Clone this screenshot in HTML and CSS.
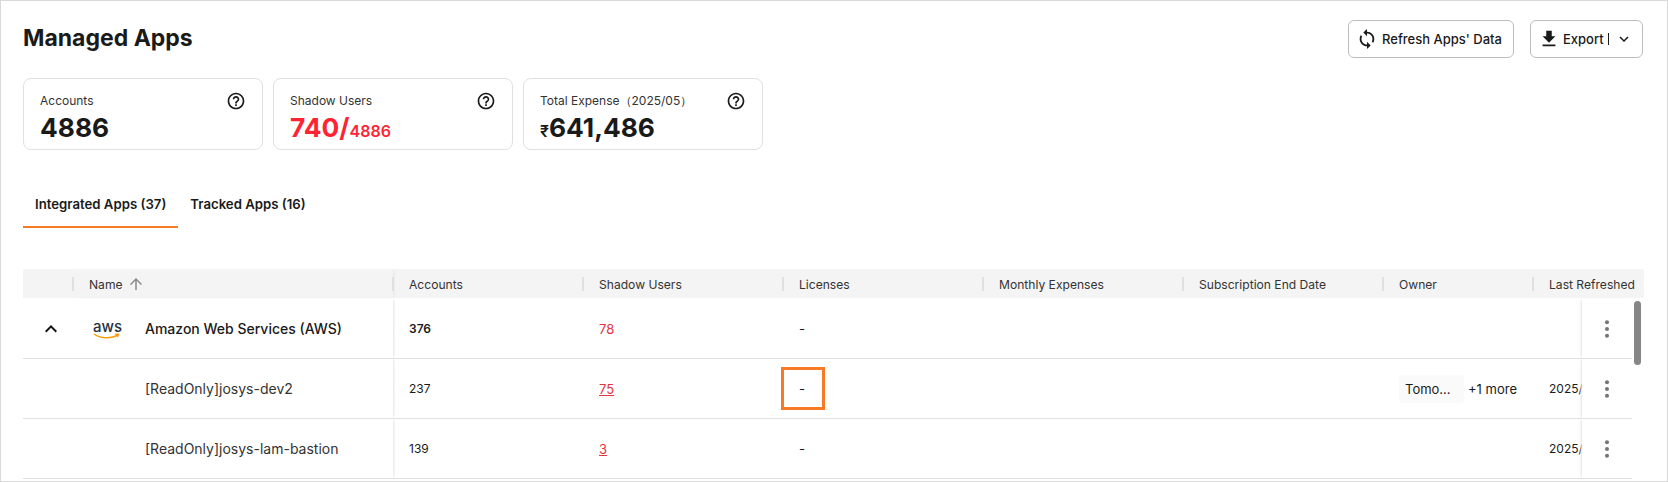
FILE: index.html
```html
<!DOCTYPE html>
<html lang="en">
  <head>
    <meta charset="UTF-8" />
    <meta name="viewport" content="width=device-width, initial-scale=1.0" />
    <title>Managed Apps</title>
    <link rel="stylesheet" href="styles.css">
  </head>
  <body>
    <div class="page">
      <div class="top">
        <h1 class="title">Managed Apps</h1>
        <div class="actions">
          <a href="javascript:;" class="btn refresh">
            <svg class="btn-icon" viewBox="0 0 24 24"><path d="M12 4V1L8 5l4 4V6c3.31 0 6 2.69 6 6 0 1.01-.25 1.97-.7 2.8l1.46 1.46C19.54 15.03 20 13.57 20 12c0-4.42-3.58-8-8-8zm0 14c-3.31 0-6-2.69-6-6 0-1.01.25-1.97.7-2.8L5.24 7.74C4.46 8.97 4 10.43 4 12c0 4.42 3.58 8 8 8v3l4-4-4-4v3z"/></svg>
            Refresh Apps' Data
          </a>
          <a href="javascript:;" class="btn export">
            <svg class="btn-icon" viewBox="0 0 24 24"><path d="M19 9h-4V3H9v6H5l7 7 7-7zM5 18v2h14v-2H5z"/></svg>
            <span class="export-label">Export</span>
            <svg class="chevron" viewBox="0 0 24 24"><path d="M16.59 8.59L12 13.17 7.41 8.59 6 10l6 6 6-6z"/></svg>
          </a>
        </div>
      </div>

      <div class="cards">
        <div class="card">
          <div class="card-head">
            <span>Accounts</span>
            <svg class="help" viewBox="0 0 24 24"><path d="M11 18h2v-2h-2v2zm1-16C6.48 2 2 6.48 2 12s4.48 10 10 10 10-4.48 10-10S17.52 2 12 2zm0 18c-4.41 0-8-3.59-8-8s3.59-8 8-8 8 3.59 8 8-3.59 8-8 8zm0-14c-2.21 0-4 1.79-4 4h2c0-1.1.9-2 2-2s2 .9 2 2c0 2-3 1.75-3 5h2c0-2.25 3-2.5 3-5 0-2.21-1.79-4-4-4z"/></svg>
          </div>
          <div class="card-value">4886</div>
        </div>
        <div class="card">
          <div class="card-head">
            <span>Shadow Users</span>
            <svg class="help" viewBox="0 0 24 24"><path d="M11 18h2v-2h-2v2zm1-16C6.48 2 2 6.48 2 12s4.48 10 10 10 10-4.48 10-10S17.52 2 12 2zm0 18c-4.41 0-8-3.59-8-8s3.59-8 8-8 8 3.59 8 8-3.59 8-8 8zm0-14c-2.21 0-4 1.79-4 4h2c0-1.1.9-2 2-2s2 .9 2 2c0 2-3 1.75-3 5h2c0-2.25 3-2.5 3-5 0-2.21-1.79-4-4-4z"/></svg>
          </div>
          <div class="card-value red">740/<small>4886</small></div>
        </div>
        <div class="card">
          <div class="card-head">
            <span>Total Expense（2025/05）</span>
            <svg class="help" viewBox="0 0 24 24"><path d="M11 18h2v-2h-2v2zm1-16C6.48 2 2 6.48 2 12s4.48 10 10 10 10-4.48 10-10S17.52 2 12 2zm0 18c-4.41 0-8-3.59-8-8s3.59-8 8-8 8 3.59 8 8-3.59 8-8 8zm0-14c-2.21 0-4 1.79-4 4h2c0-1.1.9-2 2-2s2 .9 2 2c0 2-3 1.75-3 5h2c0-2.25 3-2.5 3-5 0-2.21-1.79-4-4-4z"/></svg>
          </div>
          <div class="card-value"><small>₹</small>641,486</div>
        </div>
      </div>

      <div class="tabs">
        <a href="javascript:;" class="tab active">Integrated Apps (37)</a>
        <a href="javascript:;" class="tab">Tracked Apps (16)</a>
      </div>

      <div class="table">
        <div class="thead">
          <div class="th c-toggle"></div>
          <div class="th c-name">Name
            <svg class="sort" viewBox="0 0 24 24"><path d="M4 12l1.41 1.41L11 7.83V20h2V7.83l5.58 5.59L20 12l-8-8-8 8z"/></svg>
          </div>
          <div class="th c-accounts">Accounts</div>
          <div class="th c-wide">Shadow Users</div>
          <div class="th c-wide">Licenses</div>
          <div class="th c-wide">Monthly Expenses</div>
          <div class="th c-wide">Subscription End Date</div>
          <div class="th c-owner">Owner</div>
          <div class="th c-last">Last Refreshed</div>
        </div>

        <div class="row first">
          <div class="td c-toggle">
            <svg class="expand" viewBox="0 0 24 24"><path d="M12 8l-6 6 1.41 1.41L12 10.83l4.59 4.58L18 14z"/></svg>
          </div>
          <div class="td c-name parent">
            <span class="aws">
              <span class="aws-text">aws</span>
              <svg class="aws-smile" viewBox="0 0 28 7"><path d="M1 1c6 4.500 16 5 23 1.500" fill="none" stroke="#f90" stroke-width="1.500"/><path d="M21.500 .8l5-.3-1.600 4z" fill="#f90"/></svg>
            </span>
            Amazon Web Services (AWS)
          </div>
          <div class="td c-accounts bold">376</div>
          <div class="td c-wide shadow-num">78</div>
          <div class="td c-wide">-</div>
          <div class="td c-wide"></div>
          <div class="td c-wide"></div>
          <div class="td c-owner"></div>
          <div class="td c-last"></div>
          <div class="td c-menu">
            <svg class="dots" viewBox="0 0 4 16"><circle cx="2" cy="2" r="1.8"/><circle cx="2" cy="8" r="1.8"/><circle cx="2" cy="14" r="1.8"/></svg>
          </div>
        </div>

        <div class="row">
          <div class="td c-toggle"></div>
          <div class="td c-name child">[ReadOnly]josys-dev2</div>
          <div class="td c-accounts">237</div>
          <div class="td c-wide shadow-num"><a href="javascript:;">75</a></div>
          <div class="td c-wide">-</div>
          <div class="td c-wide"></div>
          <div class="td c-wide"></div>
          <div class="td c-owner owner">
            <span class="chip">Tomo...</span>
            <span class="more">+1 more</span>
          </div>
          <div class="td c-last">2025/</div>
          <div class="td c-menu">
            <svg class="dots" viewBox="0 0 4 16"><circle cx="2" cy="2" r="1.8"/><circle cx="2" cy="8" r="1.8"/><circle cx="2" cy="14" r="1.8"/></svg>
          </div>
        </div>

        <div class="row">
          <div class="td c-toggle"></div>
          <div class="td c-name child">[ReadOnly]josys-lam-bastion</div>
          <div class="td c-accounts">139</div>
          <div class="td c-wide shadow-num"><a href="javascript:;">3</a></div>
          <div class="td c-wide">-</div>
          <div class="td c-wide"></div>
          <div class="td c-wide"></div>
          <div class="td c-owner"></div>
          <div class="td c-last">2025/</div>
          <div class="td c-menu">
            <svg class="dots" viewBox="0 0 4 16"><circle cx="2" cy="2" r="1.8"/><circle cx="2" cy="8" r="1.8"/><circle cx="2" cy="14" r="1.8"/></svg>
          </div>
        </div>

        <!-- scrollbar and the orange callout lie over the rows -->
        <div class="scrollbar"></div>
        <div class="callout"></div>
      </div>
    </div>
  </body>
</html>
```

FILE: styles.css
```css
* {
  margin: 0;
  padding: 0;
  box-sizing: border-box;
}
html,
body {
  height: 482px;
  overflow: hidden;
  background-color: #fff;
}
body {
  font-family: Inter, "Noto Sans", sans-serif;
  color: #1a1a1a;
}
a {
  color: inherit;
  text-decoration: none;
}
.page {
  height: 482px;
  overflow: hidden;
  border: 1px solid #d9d9d9;
  padding: 19px 24px 0 22px;
}

/* title and buttons */
.top {
  display: flex;
  justify-content: space-between;
  align-items: center;
  height: 38px;
}
.title {
  font-size: 23px;
  line-height: 34px;
  font-weight: 700;
  margin-top: -2px;
}
.actions {
  display: flex;
  gap: 16px;
}
.btn {
  display: flex;
  align-items: center;
  height: 38px;
  border: 1px solid #bdbdbd;
  border-radius: 6px;
  font-size: 13px;
  font-weight: 500;
}
.refresh {
  width: 166px;
  padding-left: 7px;
  gap: 4px;
}
.export {
  width: 113px;
  padding-left: 7px;
  gap: 3px;
}
.btn-icon {
  width: 22px;
  height: 22px;
  fill: #1a1a1a;
}
.export-label {
  border-right: 1px solid #1a1a1a;
  padding-right: 4px;
  line-height: 12px;
}
.chevron {
  width: 18px;
  height: 18px;
  fill: #1a1a1a;
  margin-left: 3px;
}

/* summary cards */
.cards {
  display: flex;
  gap: 10px;
  margin-top: 20px;
}
.card {
  width: 240px;
  height: 72px;
  border: 1px solid #e0e0e0;
  border-radius: 8px;
  padding: 12px 16px 0 16px;
}
.card-head {
  display: flex;
  justify-content: space-between;
  align-items: center;
  height: 20px;
  font-size: 12px;
  line-height: 18px;
  color: #333;
}
.help {
  width: 20px;
  height: 20px;
  fill: #1a1a1a;
}
.card-value {
  font-size: 26.3px;
  line-height: 34px;
  font-weight: 700;
}
.card-value small {
  font-size: 16px;
  font-weight: 600;
}
.red {
  color: #ff2433;
}

/* tabs */
.tabs {
  display: flex;
  margin-top: 37px;
}
.tab {
  display: block;
  height: 41px;
  line-height: 34px;
  padding: 0 12px;
  font-size: 13.2px;
  font-weight: 600;
  white-space: nowrap;
}
.tab.active {
  border-bottom: 2px solid #f97a24;
}

/* table */
.table {
  position: relative;
  margin-top: 41px;
}
.thead {
  display: flex;
  height: 29px;
  background-color: #f4f4f4;
  border-radius: 0 3px 0 0;
  margin-right: -1px;
}
.th {
  display: flex;
  align-items: center;
  font-size: 12.1px;
  padding-top: 1px;
  color: #333;
  white-space: nowrap;
}
.th + .th::before {
  content: "";
  width: 2px;
  height: 14px;
  margin-left: -1px;
  margin-right: 15px;
  background-color: #e0e0e0;
  flex-shrink: 0;
}
.c-toggle {
  width: 50px;
}
.c-name {
  width: 320px;
  box-shadow: 2px 0 2px -1px #e4e4e4;
}
.c-accounts {
  width: 190px;
}
.c-wide {
  width: 200px;
}
.c-owner {
  width: 150px;
}
.th.c-last {
  width: 109px;
}
.sort {
  width: 18px;
  height: 18px;
  fill: #8a8a8a;
  margin-left: 4px;
}
.row {
  display: flex;
  width: 1609px;
  height: 60px;
  border-bottom: 1px solid #e0e0e0;
}
.row.first {
  height: 61px;
  padding-top: 1px;
}
.td {
  display: flex;
  align-items: center;
  font-size: 13px;
  padding-left: 16px;
  white-space: nowrap;
}
.td.c-last {
  width: 49px;
  font-size: 12px;
}
.td.c-menu {
  width: 50px;
  padding-left: 0;
  justify-content: center;
  box-shadow: -2px 0 2px -1px #e4e4e4;
  background-color: #fff;
}
.expand {
  width: 24px;
  height: 24px;
  fill: #111;
}
.dots {
  width: 6px;
  height: 18px;
  fill: #757575;
}
.c-name.parent {
  font-size: 14px;
  font-weight: 500;
}
.c-name.child {
  font-size: 14px;
  color: #333;
  padding-left: 72px;
}
.aws {
  display: block;
  width: 52px;
  margin-left: 4px;
  height: 18px;
  flex-shrink: 0;
}
.aws-text {
  display: block;
  width: 28px;
  text-align: center;
  font-size: 15px;
  line-height: 13px;
  color: #252f3e;
}
.aws-smile {
  display: block;
  width: 28px;
  height: 7px;
}
.bold {
  font-size: 12px;
  font-weight: 600;
}
.td.c-accounts {
  font-size: 12px;
}
.shadow-num {
  color: #e53340;
}
.shadow-num a {
  color: #e53340;
  text-decoration: underline;
}
.chip {
  display: block;
  width: 65px;
  height: 28px;
  line-height: 28px;
  padding-left: 6px;
  background-color: #fafafa;
  border-radius: 4px;
}
.more {
  margin-left: 4px;
}
.scrollbar {
  position: absolute;
  left: 1611px;
  top: 32px;
  width: 7px;
  height: 64px;
  background-color: #868686;
  border-radius: 4px;
}
.callout {
  position: absolute;
  left: 758px;
  top: 98px;
  width: 44px;
  height: 43px;
  border: 3px solid #f97a24;
}
```
